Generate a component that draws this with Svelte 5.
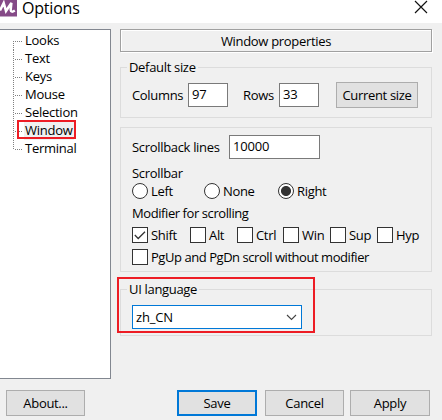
<script>
  const pages = ['Looks', 'Text', 'Keys', 'Mouse', 'Selection', 'Window', 'Terminal'];
  const modifiers = ['Shift', 'Alt', 'Ctrl', 'Win', 'Sup', 'Hyp'];
  const positions = ['Left', 'None', 'Right'];
  let page = $state('Window');
  let position = $state('Right');
</script>

<div class="dialog">
  <header>
    <svg class="logo" width="17" height="17" viewBox="0 0 17 17">
      <path d="M0 0h17v16.5H0z" fill="#854a87" />
      <path d="M0 10.5 3.7 3 6 11 11.4 3 10.7 10Q11 13 14.8 10.5" fill="none" stroke="#fff" stroke-width="2.5" />
    </svg>
    <h1>Options</h1>
    <svg class="close" width="14" height="14" viewBox="0 0 14 14"><path d="m1 1 12 12M13 1 1 13" stroke="#111" stroke-width="1.15" /></svg>
  </header>
  <main>
    <nav>
      {#each pages as name}
        <div class="node"><i></i><span class:selected={name === page}>{name}</span></div>
      {/each}
      <div class="mark mark-page"></div>
    </nav>
    <div class="panel">
      <div class="heading"><span>Window properties</span></div>
      <section class="size">
        <h2 class="legend">Default size</h2>
        <span class="columns">Columns</span><div class="field">97</div>
        <span class="rows">Rows</span><div class="field">33</div>
        <button class="current">Current size</button>
      </section>
      <section class="scroll">
        <div class="lines"><span>Scrollback lines</span><div class="field wide">10000</div></div>
        <div class="caption bar">Scrollbar</div>
        <div class="radios">
          {#each positions as name}
            <div class="option"><b class="radio" class:on={name === position}></b><span>{name}</span></div>
          {/each}
        </div>
        <div class="caption modifier">Modifier for scrolling</div>
        <div class="checks">
          {#each modifiers as name}
            <div class="option"><b class="box">{#if name === 'Shift'}<svg width="14" height="14" viewBox="0 0 14 14"><path d="m1.8 7 3.4 3.5L12 3.8" fill="none" stroke="#333" stroke-width="1.25" /></svg>{/if}</b><span>{name}</span></div>
          {/each}
        </div>
        <div class="option last"><b class="box"></b><span>PgUp and PgDn scroll without modifier</span></div>
      </section>
      <section class="language">
        <h2 class="legend">UI language</h2>
        <div class="select"><span>zh_CN</span><svg width="11" height="7" viewBox="0 0 11 7"><path d="m1 1 4.5 4.5L10 1" fill="none" stroke="#444" stroke-width="1.1" /></svg></div>
        <div class="mark mark-language"></div>
      </section>
    </div>
  </main>
  <footer>
    <button class="about">About...</button>
    <button class="save">Save</button>
    <button class="cancel">Cancel</button>
    <button class="apply">Apply</button>
  </footer>
</div>

<style>
  :global(body) { margin: 0; background: #f0f0f0; }
  * { box-sizing: border-box; }
  .dialog { width: 442px; height: 420px; overflow: hidden; background: #f0f0f0; color: #000; font: 13px/18px "Open Sans", "Noto Sans", sans-serif; letter-spacing: -0.32px; white-space: nowrap; }
  header { height: 23px; background: #fff; display: flex; align-items: flex-start; }
  .logo { flex: none; }
  h1 { margin: 0 0 0 5px; font: 16px/16px "Open Sans", "Noto Sans", sans-serif; letter-spacing: -0.2px; flex: 1; }
  .close { margin-right: 14px; }
  main { display: flex; padding-top: 6px; }
  nav { position: relative; width: 111px; height: 350px; background: #fff; border: 1px solid #828790; border-left: 0; padding-top: 2px; flex: none; letter-spacing: -0.25px; }
  .node { height: 18px; display: flex; padding-left: 13px; position: relative; }
  .node::before { content: ""; width: 1px; height: 18px; background: repeating-linear-gradient(#808080 0 1px, transparent 1px 2px); }
  .node:first-child::before { height: 9px; margin-top: 9px; }
  .node:nth-child(7)::before { height: 10px; }
  .node i { width: 8px; height: 1px; margin: 9px 2px 0 0; background: repeating-linear-gradient(90deg, transparent 0 1px, #808080 1px 2px); }
  .node span { padding: 0 1px; line-height: 17px; height: 18px; }
  .node .selected { background: #f0f0f0; }
  .mark { position: absolute; border: 2px solid #ed1c24; }
  .mark-page { left: 17px; top: 90px; width: 59px; height: 19px; }
  .panel { width: 312px; margin-left: 9px; }
  .heading { height: 23px; border: 1px solid #a0a0a0; box-shadow: inset 1px 1px #fff, 1px 1px #fff; text-align: center; line-height: 23px; }
  section { position: relative; border: 1px solid #dcdcdc; }
  .legend { position: absolute; left: 6px; top: -10px; margin: 0; padding: 0 2px; background: #f0f0f0; font: inherit; }
  .field { width: 40px; height: 24px; border: 1px solid #7a7a7a; background: #fff; padding-left: 3px; line-height: 21px; letter-spacing: -0.2px; }
  .size { margin-top: 15px; height: 51px; display: flex; align-items: flex-start; padding: 15px 0 0 11px; }
  .size > span { line-height: 25px; }
  .columns { width: 56px; }
  .rows { width: 36px; margin-left: 15px; }
  button { height: 26px; border: 1px solid #adadad; background: #e1e1e1; color: #000; font: inherit; letter-spacing: inherit; padding: 0; text-align: center; line-height: 24px; }
  .current { width: 82px; margin: -1px 0 0 17px; }
  .scroll { margin-top: 9px; height: 145px; padding: 7px 0 0 11px; }
  .lines { display: flex; line-height: 25px; height: 24px; }
  .lines > span { width: 97px; }
  .wide { width: 91px; }
  .caption { height: 18px; }
  .bar { margin-top: 5px; }
  .radios { display: flex; margin-top: 1px; }
  .option { display: flex; height: 16px; line-height: 17px; }
  .option b { width: 16px; height: 16px; flex: none; margin-right: 3px; border: 1px solid #333; background: #fff; }
  .option .radio { border-radius: 50%; }
  .option .radio.on { background: radial-gradient(circle, #333 0 4.6px, #fff 5.4px); }
  .radios .option { width: 72px; }
  .radios .option:nth-child(2) { width: 74px; }
  .modifier { margin-top: 5px; letter-spacing: -0.42px; }
  .checks { display: flex; margin-top: 5px; }
  .checks .option { width: 47px; }
  .checks .option:first-child { width: 58px; }
  .checks .option:nth-child(3) { width: 46px; }
  .box svg { display: block; }
  .last { margin-top: 6px; letter-spacing: -0.45px; }
  .language { margin-top: 17px; height: 47px; padding: 15px 0 0 11px; }
  .select { width: 170px; height: 24px; border: 1px solid #0078d7; background: #fff; display: flex; align-items: center; justify-content: space-between; padding: 0 4px 0 3px; line-height: 21px; letter-spacing: -0.2px; }
  .mark-language { left: -4px; top: -13px; width: 198px; height: 56px; }
  footer { display: flex; padding: 11px 0 0 6px; }
  .about { width: 79px; }
  .save { width: 80px; margin-left: 92px; border: 2px solid #0078d7; line-height: 22px; }
  .cancel { width: 79px; margin-left: 8px; }
  .apply { width: 80px; margin-left: 6px; }
</style>
